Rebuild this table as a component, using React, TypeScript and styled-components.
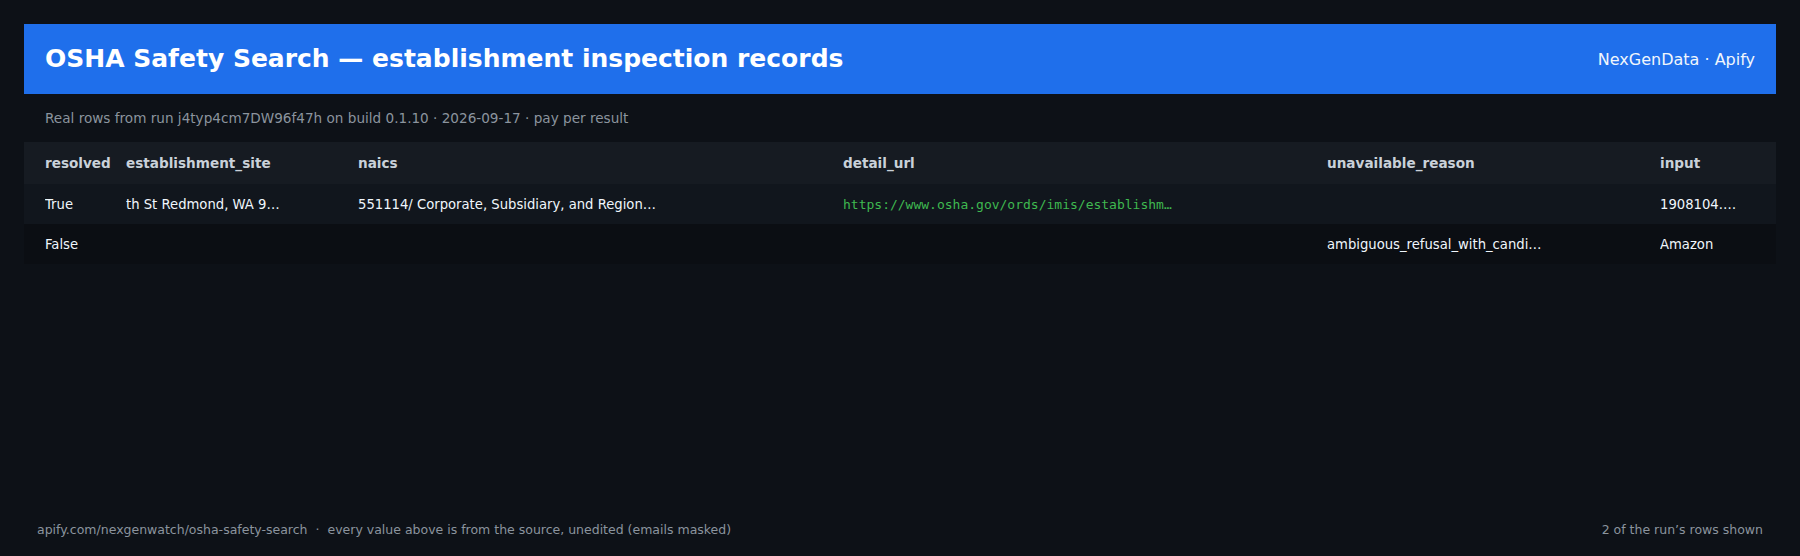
import React from "react";
import styled, { createGlobalStyle } from "styled-components";

const GlobalStyle = createGlobalStyle`
  html, body { margin: 0; padding: 0; background: #0d1117; }
  body { font-family: "DejaVu Sans", "Noto Sans", sans-serif; color: #e6edf3; }
  * { box-sizing: border-box; }
`;

const Page = styled.div`
  min-height: 100vh;
  height: 556px;
  display: flex;
  flex-direction: column;
  padding: 24px 24px 0;
`;

const Banner = styled.header`
  display: flex;
  align-items: center;
  justify-content: space-between;
  height: 70px;
  padding: 0 21px;
  background: #1f6feb;
`;

const Title = styled.h1`
  margin: 0;
  font-size: 25px;
  font-weight: 700;
  color: #ffffff;
  line-height: 30px;
`;

const Brand = styled.div`
  font-size: 16px;
  color: #f0f6fc;
`;

const Subtitle = styled.p`
  margin: 0;
  padding: 16px 21px 15px;
  font-size: 13.6px;
  line-height: 17px;
  color: #8b949e;
`;

const COLS = "81px 232px 485px 484px 333px 1fr";

const Row = styled.div<{ $variant: "head" | "odd" | "even" }>`
  display: grid;
  grid-template-columns: ${COLS};
  align-items: center;
  height: ${(p) => (p.$variant === "head" ? 42 : 40)}px;
  padding-left: 21px;
  background: ${(p) =>
    p.$variant === "head" ? "#161b22" : p.$variant === "odd" ? "#11161d" : "#0b0e13"};
`;

const HeadCell = styled.div`
  font-size: 13.6px;
  font-weight: 700;
  color: #c9d1d9;
  white-space: nowrap;
`;

const Cell = styled.div<{ $mono?: boolean }>`
  font-size: 13.2px;
  color: ${(p) => (p.$mono ? "#3fb950" : "#f0f6fc")};
  font-family: ${(p) => (p.$mono ? '"DejaVu Sans Mono", "Liberation Mono", monospace' : "inherit")};
  ${(p) => (p.$mono ? "font-size: 13px;" : "")}
  white-space: nowrap;
  overflow: hidden;
`;

const Footer = styled.footer`
  margin-top: auto;
  display: flex;
  justify-content: space-between;
  padding: 0 13px 18px;
  font-size: 12.5px;
  line-height: 16px;
  color: #8b949e;
`;

const Sep = styled.span`
  margin: 0 8px;
`;

const headers = ["resolved", "establishment_site", "naics", "detail_url", "unavailable_reason", "input"];

const rows: { cells: string[] }[] = [
  {
    cells: [
      "True",
      "th St Redmond, WA 9…",
      "551114/ Corporate, Subsidiary, and Region…",
      "https://www.osha.gov/ords/imis/establishm…",
      "",
      "1908104.…",
    ],
  },
  { cells: ["False", "", "", "", "ambiguous_refusal_with_candi…", "Amazon"] },
];

export default function App() {
  return (
    <>
      <GlobalStyle />
      <Page>
        <Banner>
          <Title>OSHA Safety Search — establishment inspection records</Title>
          <Brand>NexGenData · Apify</Brand>
        </Banner>
        <Subtitle>
          Real rows from run j4typ4cm7DW96f47h on build 0.1.10 · 2026-09-17 · pay per result
        </Subtitle>
        <div>
          <Row $variant="head">
            {headers.map((h) => (
              <HeadCell key={h}>{h}</HeadCell>
            ))}
          </Row>
          {rows.map((r, i) => (
            <Row key={i} $variant={i % 2 === 0 ? "odd" : "even"}>
              {r.cells.map((c, j) => (
                <Cell key={j} $mono={j === 3}>
                  {c}
                </Cell>
              ))}
            </Row>
          ))}
        </div>
        <Footer>
          <span>
            apify.com/nexgenwatch/osha-safety-search<Sep>·</Sep>every value above is from the source,
            unedited (emails masked)
          </span>
          <span>2 of the run’s rows shown</span>
        </Footer>
      </Page>
    </>
  );
}
